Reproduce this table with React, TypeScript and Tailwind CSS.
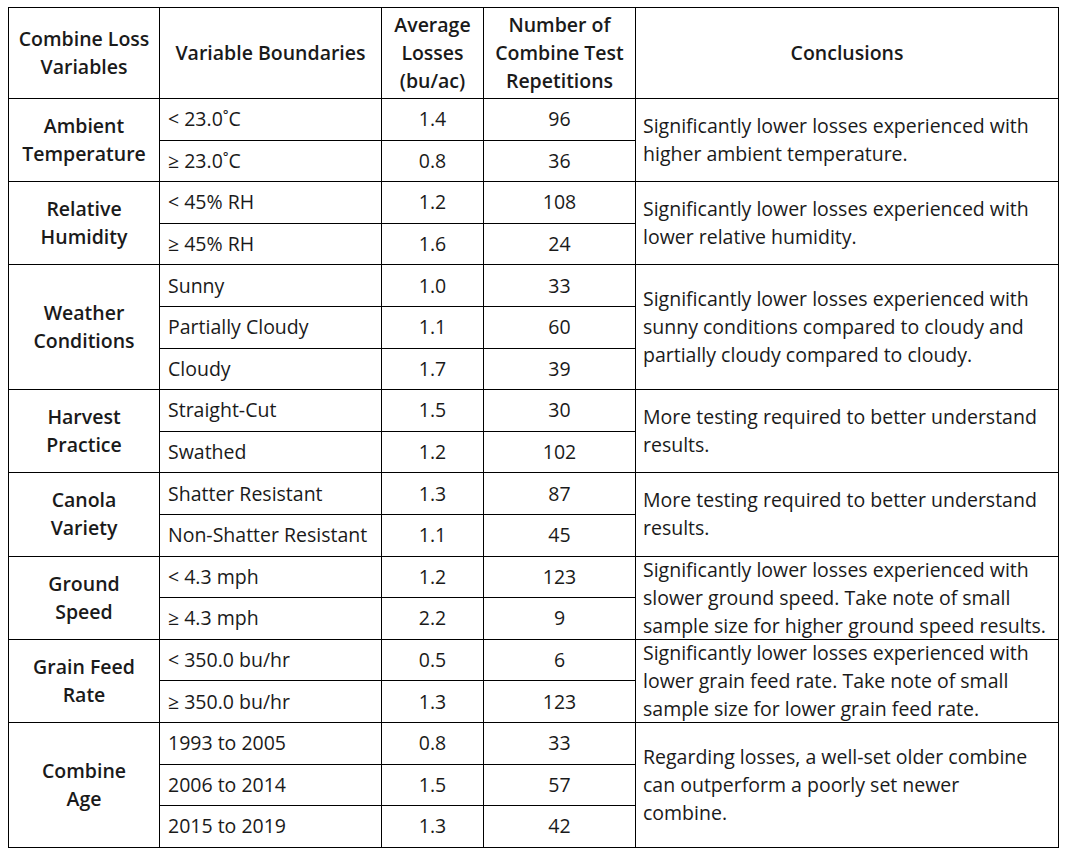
import React from "react";

type Group = {
  name: string[];
  rows: { bound: string; avg: string; reps: string }[];
  conclusion: string[];
};

const GROUPS: Group[] = [
  {
    name: ["Ambient", "Temperature"],
    rows: [
      { bound: "< 23.0˚C", avg: "1.4", reps: "96" },
      { bound: "≥ 23.0˚C", avg: "0.8", reps: "36" },
    ],
    conclusion: ["Significantly lower losses experienced with", "higher ambient temperature."],
  },
  {
    name: ["Relative", "Humidity"],
    rows: [
      { bound: "< 45% RH", avg: "1.2", reps: "108" },
      { bound: "≥ 45% RH", avg: "1.6", reps: "24" },
    ],
    conclusion: ["Significantly lower losses experienced with", "lower relative humidity."],
  },
  {
    name: ["Weather", "Conditions"],
    rows: [
      { bound: "Sunny", avg: "1.0", reps: "33" },
      { bound: "Partially Cloudy", avg: "1.1", reps: "60" },
      { bound: "Cloudy", avg: "1.7", reps: "39" },
    ],
    conclusion: [
      "Significantly lower losses experienced with",
      "sunny conditions compared to cloudy and",
      "partially cloudy compared to cloudy.",
    ],
  },
  {
    name: ["Harvest", "Practice"],
    rows: [
      { bound: "Straight-Cut", avg: "1.5", reps: "30" },
      { bound: "Swathed", avg: "1.2", reps: "102" },
    ],
    conclusion: ["More testing required to better understand", "results."],
  },
  {
    name: ["Canola", "Variety"],
    rows: [
      { bound: "Shatter Resistant", avg: "1.3", reps: "87" },
      { bound: "Non-Shatter Resistant", avg: "1.1", reps: "45" },
    ],
    conclusion: ["More testing required to better understand", "results."],
  },
  {
    name: ["Ground", "Speed"],
    rows: [
      { bound: "< 4.3 mph", avg: "1.2", reps: "123" },
      { bound: "≥ 4.3 mph", avg: "2.2", reps: "9" },
    ],
    conclusion: [
      "Significantly lower losses experienced with",
      "slower ground speed. Take note of small",
      "sample size for higher ground speed results.",
    ],
  },
  {
    name: ["Grain Feed", "Rate"],
    rows: [
      { bound: "< 350.0 bu/hr", avg: "0.5", reps: "6" },
      { bound: "≥ 350.0 bu/hr", avg: "1.3", reps: "123" },
    ],
    conclusion: [
      "Significantly lower losses experienced with",
      "lower grain feed rate. Take note of small",
      "sample size for lower grain feed rate.",
    ],
  },
  {
    name: ["Combine", "Age"],
    rows: [
      { bound: "1993 to 2005", avg: "0.8", reps: "33" },
      { bound: "2006 to 2014", avg: "1.5", reps: "57" },
      { bound: "2015 to 2019", avg: "1.3", reps: "42" },
    ],
    conclusion: ["Regarding losses, a well-set older combine", "can outperform a poorly set newer", "combine."],
  },
];

const SPAN: Record<number, string> = { 2: "row-span-2", 3: "row-span-3" };

export default function App() {
  return (
    <div className="min-h-screen bg-white pl-[8px] pt-[7px] font-['Open_Sans','Lato',sans-serif] text-[19.5px] leading-[28px] text-[#1a1a1a]">
      <div className="grid w-[1051px] grid-cols-[150px_221px_101px_151px_422px] grid-rows-[90px_repeat(18,40.6px)] gap-px border border-black bg-black">
        {/* Header */}
        <div className="flex items-center justify-center bg-white text-center font-semibold">
          Combine Loss
          <br />
          Variables
        </div>
        <div className="flex items-center justify-center bg-white font-semibold">Variable Boundaries</div>
        <div className="flex items-center justify-center bg-white text-center font-semibold">
          Average
          <br />
          Losses
          <br />
          (bu/ac)
        </div>
        <div className="flex items-center justify-center bg-white text-center font-semibold">
          Number of
          <br />
          Combine Test
          <br />
          Repetitions
        </div>
        <div className="flex items-center justify-center bg-white font-semibold">Conclusions</div>

        {GROUPS.map((g) => (
          <React.Fragment key={g.name.join(" ")}>
            <div
              className={`${SPAN[g.rows.length]} flex items-center justify-center bg-white text-center font-semibold`}
              style={{ gridColumn: 1 }}
            >
              {g.name[0]}
              <br />
              {g.name[1]}
            </div>
            {g.rows.map((r, i) => (
              <React.Fragment key={r.bound}>
                <div className="flex items-center bg-white px-[8px]" style={{ gridColumn: 2 }}>
                  {r.bound}
                </div>
                <div className="flex items-center justify-center bg-white" style={{ gridColumn: 3 }}>
                  {r.avg}
                </div>
                <div className="flex items-center justify-center bg-white" style={{ gridColumn: 4 }}>
                  {r.reps}
                </div>
                {i === 0 && (
                  <div
                    className={`${SPAN[g.rows.length]} flex flex-col justify-center bg-white px-[7px] whitespace-nowrap`}
                    style={{ gridColumn: 5 }}
                  >
                    {g.conclusion.map((line) => (
                      <span key={line}>{line}</span>
                    ))}
                  </div>
                )}
              </React.Fragment>
            ))}
          </React.Fragment>
        ))}
      </div>
    </div>
  );
}
